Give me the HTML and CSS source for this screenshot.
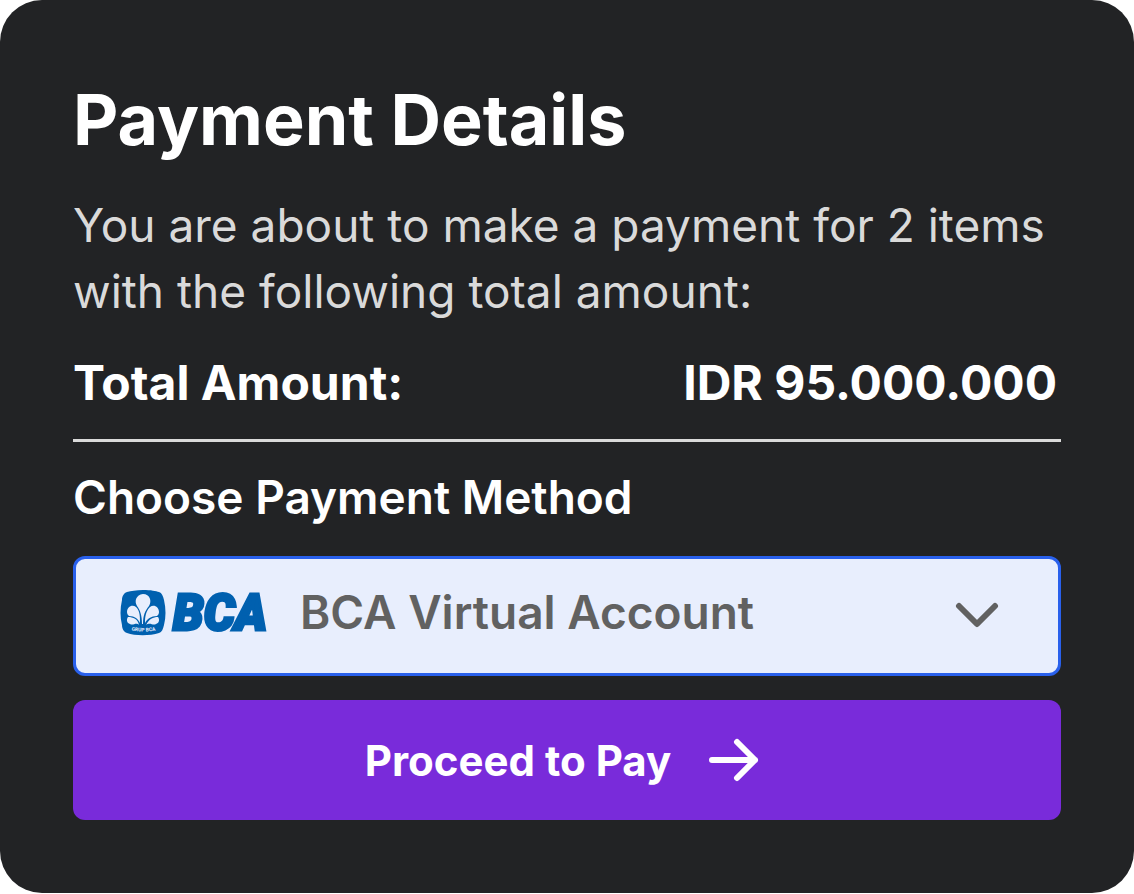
FILE: index.html
```
<!DOCTYPE html>
<html lang="en">
<head>
  <meta charset="utf-8">
  <meta name="viewport" content="width=device-width, initial-scale=1">
  <title>Payment Details</title>
  <link rel="stylesheet" href="styles.css">
</head>
<body>
  <main class="card">
    <h1 class="title">Payment Details</h1>
    <p class="intro">You are about to make a payment for 2 items with the following total amount:</p>
    <div class="total">
      <span>Total Amount:</span>
      <span>IDR 95.000.000</span>
    </div>
    <form class="form">
      <label class="label" for="method">Choose Payment Method</label>
      <div class="method">
        <select class="select" id="method">
          <option>BCA Virtual Account</option>
        </select>
        <svg class="logo" viewBox="0 0 146 48" aria-hidden="true">
          <path class="blue" d="M23 1C31 1 36 2 39 3C42 4 43 7 44 11C46 20 46 28 44 36C43 40 42 43 39 44C30 47 15 47 7 44C4 43 2 40 2 36C0 28 0 20 2 11C2 7 4 4 7 3C11 2 16 1 23 1Z"/>
          <g class="flower">
            <path d="M22 35C22 26 20 21 17 17C14 12 16 6 23 5C30 5 32 12 29 17C25 22 23 26 23 35Z"/>
            <path d="M20 34C20 27 20 22 16 18C12 15 7 18 7 23C7 25 8 26 9 27C15 27 18 30 20 34Z"/>
            <path d="M25 34C25 27 26 22 30 18C34 15 39 18 39 23C39 25 38 26 37 27C31 27 27 30 25 34Z"/>
            <path d="M19 36C18 30 13 28 8 28C6 31 7 34 10 35C13 37 16 33 19 36Z"/>
            <path d="M26 36C29 30 33 28 38 28C40 31 39 34 36 35C33 37 30 33 26 36Z"/>
          </g>
          <path id="arc" fill="none" d="M9 41Q23 44 38 41"/>
          <text class="logo-small"><textPath href="#arc" startOffset="50%">GRUP BCA</textPath></text>
          <text class="logo-text" x="53" y="41">BCA</text>
        </svg>
        <svg class="chevron" viewBox="0 0 44 26" aria-hidden="true">
          <path d="M4 4L22 22L40 4"/>
        </svg>
      </div>
      <button class="pay" type="button">
        Proceed to Pay
        <svg class="arrow" viewBox="0 0 50 44" aria-hidden="true">
          <path d="M3 22H46M28 4L46 22L28 40"/>
        </svg>
      </button>
    </form>
  </main>
</body>
</html>
```
FILE: styles.css
```
* {
  box-sizing: border-box;
}

body {
  margin: 0;
  background: #fff;
  font-family: Inter, "Liberation Sans", sans-serif;
}

.card {
  padding: 80px 73px 73px;
  border-radius: 42px;
  background: #222325;
  color: #fff;
}

.title {
  margin: 0;
  font-size: 70px;
  font-weight: 700;
  line-height: 80px;
}

.intro {
  margin: 32px 0 26px;
  color: #dadada;
  font-size: 46px;
  line-height: 66px;
}

.total {
  display: flex;
  justify-content: space-between;
  padding: 0 4px 23px 0;
  border-bottom: 3px solid #dadada;
  font-size: 48px;
  font-weight: 700;
  line-height: 66px;
}

.form {
  display: flex;
  flex-direction: column;
}

.label {
  padding: 22px 0 26px;
  font-size: 46px;
  font-weight: 600;
  line-height: 66px;
}

.method {
  position: relative;
}

.select {
  display: block;
  width: 100%;
  height: 120px;
  padding: 0 120px 8px 224px;
  border: 3px solid #2960ec;
  border-radius: 12px;
  background: #e8eefd;
  color: #616161;
  font: 600 46px Inter, "Liberation Sans", sans-serif;
  appearance: none;
}

.logo {
  position: absolute;
  top: 33px;
  left: 47px;
  width: 146px;
  height: 48px;
  overflow: visible;
  pointer-events: none;
}

.blue {
  fill: #0060af;
}

.flower {
  fill: #e8eefd;
}

.logo-text {
  fill: #0060af;
  stroke: #0060af;
  stroke-width: 3px;
  font: italic 900 49px Roboto, sans-serif;
}

.logo-small {
  fill: #e8eefd;
  font: 700 5px Roboto, sans-serif;
  text-anchor: middle;
}

.chevron {
  position: absolute;
  top: 46px;
  right: 62px;
  width: 44px;
  height: 26px;
  pointer-events: none;
}

.chevron path,
.arrow path {
  fill: none;
  stroke: #616161;
  stroke-width: 6px;
  stroke-linecap: round;
  stroke-linejoin: round;
}

.pay {
  display: flex;
  align-items: center;
  justify-content: center;
  gap: 38px;
  height: 120px;
  margin-top: 24px;
  padding: 0 16px 0 6px;
  border: 0;
  border-radius: 12px;
  background: #792bda;
  color: #fff;
  font: 700 42px Inter, "Liberation Sans", sans-serif;
}

.arrow {
  width: 50px;
  height: 44px;
}

.arrow path {
  stroke: #fff;
}
```
